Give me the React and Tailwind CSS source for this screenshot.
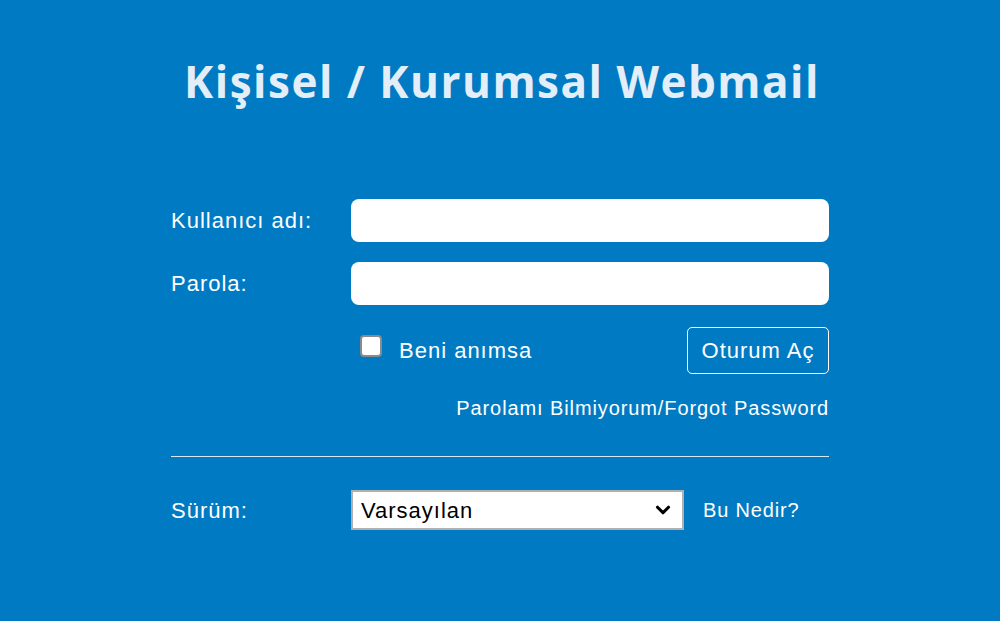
import { ChevronDown } from "lucide-react";

export default function App() {
  return (
    <div
      className="w-[1000px] h-[621px] bg-[#007bc3] text-white overflow-hidden"
      style={{ fontFamily: "Arial, 'Liberation Sans', sans-serif" }}
    >
      <h1 className="pt-[53px] pl-[4px] text-center text-[44px] font-bold leading-[56px] text-[#e3eef8] font-['Open_Sans',sans-serif] tracking-[1.5px]">
        Kişisel / Kurumsal Webmail
      </h1>

      <div className="mx-[171px] mt-[90px] text-[22px] tracking-[1px]">
        <div className="flex items-center h-[43px]">
          <label className="w-[180px]">Kullanıcı adı:</label>
          <input className="flex-1 h-[43px] rounded-[8px] bg-white outline-none" />
        </div>
        <div className="flex items-center h-[43px] mt-[20px]">
          <label className="w-[180px]">Parola:</label>
          <input type="password" className="flex-1 h-[43px] rounded-[8px] bg-white outline-none" />
        </div>

        <div className="flex items-center justify-between ml-[180px] mt-[22px] h-[47px]">
          <label className="flex items-center">
            <span className="ml-[9px] w-[22px] h-[22px] rounded-[4px] bg-white border-2 border-[#8a8a8a] -mt-[10px]" />
            <span className="ml-[17px]">Beni anımsa</span>
          </label>
          <button className="h-[47px] w-[142px] border border-white rounded-[5px] text-white tracking-[1px]">
            Oturum Aç
          </button>
        </div>

        <div className="text-right text-[20px] tracking-[0.9px] mt-[20px] leading-[28px]">
          Parolamı Bilmiyorum/Forgot Password
        </div>

        <div className="h-px bg-[#d8e8f5] mt-[34px]" />

        <div className="flex items-center mt-[33px] h-[40px]">
          <label className="w-[180px]">Sürüm:</label>
          <div className="relative w-[333px] h-[40px] bg-white border-2 border-[#b0b0b0] flex items-center px-[8px] text-black">
            Varsayılan
            <ChevronDown className="absolute right-[8px] w-[22px] h-[22px] text-black" strokeWidth={3.4} />
          </div>
          <span className="ml-[19px] text-[20px] tracking-[0.85px]">Bu Nedir?</span>
        </div>
      </div>
    </div>
  );
}
